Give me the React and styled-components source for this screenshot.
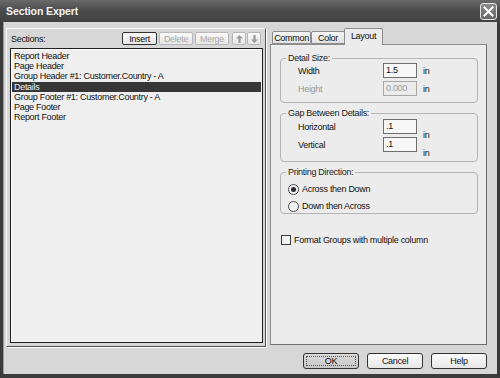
import React from 'react';
import styled, { createGlobalStyle } from 'styled-components';

const Global = createGlobalStyle`
  html, body { margin: 0; padding: 0; background: #3a3a3a; }
  body { font-family: "Liberation Sans", Arial, sans-serif; font-size: 9px; letter-spacing: -0.3px; color: #111; }
  * { box-sizing: border-box; }
`;

const Window = styled.div`
  width: 500px;
  height: 378px;
  display: flex;
  flex-direction: column;
  background: #3b3b3b;
`;

const TitleBar = styled.div`
  height: 22px;
  flex: none;
  display: flex;
  align-items: center;
  justify-content: space-between;
  padding: 0 3px 0 6px;
  background: linear-gradient(#6a6a6a, #4c4c4c 45%, #404040);
`;

const Title = styled.span`
  color: #f4f4f4;
  font-weight: bold;
  font-size: 10.5px;
  letter-spacing: -0.1px;
`;

const CloseButton = styled.div`
  width: 17px;
  height: 17px;
  border: 1px solid #e4e4e4;
  border-radius: 3px;
  background: linear-gradient(#8a8a8a, #666);
  display: flex;
  align-items: center;
  justify-content: center;
`;

const Body = styled.div`
  flex: 1;
  margin: 0 3px 4px;
  background: #d7d7d7;
  border-left: 1px solid #9a9a9a;
  display: flex;
  flex-direction: column;
  padding: 6px 10px 0 2px;
`;

const Main = styled.div`
  display: flex;
  gap: 4px;
  height: 319px;
`;

const LeftPanel = styled.div`
  width: 260px;
  display: flex;
  flex-direction: column;
  padding: 3px 2px 3px 3px;
  border-top: 1px solid #f6f6f6;
  border-left: 1px solid #f6f6f6;
  border-right: 1px solid #505050;
  border-bottom: 1px solid #505050;
  box-shadow: 1px 1px 0 #ffffff;
`;

const HeaderRow = styled.div`
  display: flex;
  align-items: center;
  height: 13px;
  gap: 2px;
`;

const Label = styled.span`
  flex: 1;
  padding-left: 1px;
`;

const SmallButton = styled.div`
  height: 13px;
  width: ${p => p.$w}px;
  display: flex;
  align-items: center;
  justify-content: center;
  border-radius: 2px;
  border: 1px solid ${p => (p.$disabled ? '#b8b8b8' : '#333')};
  color: ${p => (p.$disabled ? '#a8a8a8' : '#111')};
  background: linear-gradient(#fafafa, #e6e6e6);
`;

const ArrowGroup = styled.div`
  display: flex;
  gap: 1px;
  margin-left: 1px;
  margin-right: 2px;
`;

const List = styled.div`
  margin-top: 3px;
  flex: 1;
  background: #efefef;
  border: 1px solid #1e1e1e;
  box-shadow: inset 1px 1px 0 #fff;
  padding: 2px 1px;
`;

const ListItem = styled.div`
  height: 10.2px;
  line-height: 10px;
  padding-left: 2px;
  white-space: nowrap;
  background: ${p => (p.$selected ? '#363636' : 'transparent')};
  color: ${p => (p.$selected ? '#f0f0f0' : '#111')};
`;

const RightColumn = styled.div`
  width: 217px;
  display: flex;
  flex-direction: column;
`;

const Tabs = styled.div`
  display: flex;
  align-items: flex-end;
  height: 16px;
  padding-left: 2px;
  position: relative;
  z-index: 1;
`;

const Tab = styled.div`
  height: ${p => (p.$active ? 17 : 13)}px;
  margin-bottom: ${p => (p.$active ? -1 : 0)}px;
  width: ${p => p.$w}px;
  display: flex;
  align-items: center;
  justify-content: center;
  padding-bottom: ${p => (p.$active ? 3 : 0)}px;
  border: 1px solid #8c8c8c;
  border-bottom: ${p => (p.$active ? 'none' : '1px solid #8c8c8c')};
  border-radius: 2px 2px 0 0;
  background: ${p => (p.$active ? '#ececec' : 'linear-gradient(#f6f6f6, #e2e2e2)')};
  margin-left: ${p => (p.$active ? -1 : 0)}px;
`;

const TabPanel = styled.div`
  height: 301px;
  background: #ececec;
  border: 1px solid #8c8c8c;
  border-right-color: #6e6e6e;
  border-bottom-color: #6e6e6e;
  padding: 8px 8px 0 9px;
  display: flex;
  flex-direction: column;
`;

const Group = styled.fieldset`
  margin: 0 0 ${p => p.$mb || 0}px;
  padding: 0 0 ${p => p.$pb}px 0;
  border: 1px solid #b4b4b4;
  border-radius: 4px;
  min-width: 0;
  display: flex;
  flex-direction: column;
  gap: 3px;
`;

const Legend = styled.legend`
  margin-left: 5px;
  padding: 0 2px;
  line-height: 10px;
  height: 10px;
  color: #222;
`;

const FieldRow = styled.div`
  display: flex;
  align-items: ${p => (p.$drop ? 'flex-start' : 'center')};
  height: 15px;
  padding-left: 17px;
  margin-top: ${p => p.$mt || 0}px;
`;

const FieldLabel = styled.span`
  width: 85px;
  color: ${p => (p.$disabled ? '#9a9a9a' : '#111')};
  align-self: center;
`;

const Input = styled.div`
  width: 34px;
  height: 15px;
  border: 1px solid ${p => (p.$disabled ? '#a8a8a8' : '#6f6f6f')};
  background: ${p => (p.$disabled ? '#ebebeb' : '#f7f7f7')};
  color: ${p => (p.$disabled ? '#a0a0a0' : '#111')};
  padding: 1px 2px;
  line-height: 11px;
`;

const Unit = styled.span`
  margin-left: 6px;
  padding-top: ${p => (p.$drop ? 11 : 0)}px;
  line-height: 10px;
`;

const Option = styled.div`
  display: flex;
  align-items: center;
  height: 14px;
  padding-left: 7px;
  gap: 3px;
  margin-top: ${p => p.$mt || 0}px;
`;

const Radio = styled.span`
  width: 11px;
  height: 11px;
  border-radius: 50%;
  border: 1px solid #4a4a4a;
  background: #f4f4f4;
  display: flex;
  align-items: center;
  justify-content: center;
  &::after {
    content: '';
    width: 5px;
    height: 5px;
    border-radius: 50%;
    background: ${p => (p.$checked ? '#2a2a2a' : 'transparent')};
  }
`;

const CheckRow = styled.div`
  display: flex;
  align-items: center;
  gap: 3px;
  margin-top: 21px;
  margin-left: 1px;
`;

const Checkbox = styled.span`
  width: 10px;
  height: 10px;
  border: 1px solid #3a3a3a;
  background: #f4f4f4;
`;

const Footer = styled.div`
  display: flex;
  justify-content: flex-end;
  gap: 8px;
  margin-top: 6px;
`;

const DialogButton = styled.div`
  width: 56px;
  height: 16px;
  display: flex;
  align-items: center;
  justify-content: center;
  border: 1px solid #333;
  border-radius: 3px;
  background: ${p => (p.$default ? 'linear-gradient(#dadada, #c8c8c8)' : 'linear-gradient(#fbfbfb, #e6e6e6)')};
  position: relative;
  ${p => p.$default && `
    &::before {
      content: '';
      position: absolute;
      inset: 2px;
      border: 1px dotted #555;
    }
  `}
`;

const Arrow = ({ down }) => (
  <svg width="7" height="8" viewBox="0 0 7 8" style={{ transform: down ? 'rotate(180deg)' : 'none' }}>
    <path d="M3.5 0 L7 3.6 L4.6 3.6 L4.6 8 L2.4 8 L2.4 3.6 L0 3.6 Z" fill="#9a9a9a" />
  </svg>
);

const sections = [
  'Report Header',
  'Page Header',
  'Group Header #1: Customer.Country - A',
  'Details',
  'Group Footer #1: Customer.Country - A',
  'Page Footer',
  'Report Footer',
];

export default function App() {
  return (
    <>
      <Global />
      <Window>
        <TitleBar>
          <Title>Section Expert</Title>
          <CloseButton>
            <svg width="11" height="11" viewBox="0 0 11 11">
              <path d="M1.5 1.5 L9.5 9.5 M9.5 1.5 L1.5 9.5" stroke="#fff" strokeWidth="2" strokeLinecap="square" />
            </svg>
          </CloseButton>
        </TitleBar>
        <Body>
          <Main>
            <LeftPanel>
              <HeaderRow>
                <Label>Sections:</Label>
                <SmallButton $w={35}>Insert</SmallButton>
                <SmallButton $w={34} $disabled>Delete</SmallButton>
                <SmallButton $w={34} $disabled>Merge</SmallButton>
                <ArrowGroup>
                  <SmallButton $w={14} $disabled><Arrow /></SmallButton>
                  <SmallButton $w={14} $disabled><Arrow down /></SmallButton>
                </ArrowGroup>
              </HeaderRow>
              <List>
                {sections.map(s => (
                  <ListItem key={s} $selected={s === 'Details'}>{s}</ListItem>
                ))}
              </List>
            </LeftPanel>
            <RightColumn>
              <Tabs>
                <Tab $w={39}>Common</Tab>
                <Tab $w={34}>Color</Tab>
                <Tab $w={39} $active>Layout</Tab>
              </Tabs>
              <TabPanel>
                <Group $pb={6} $mb={5}>
                  <Legend>Detail Size:</Legend>
                  <FieldRow>
                    <FieldLabel>Width</FieldLabel>
                    <Input>1.5</Input>
                    <Unit>in</Unit>
                  </FieldRow>
                  <FieldRow>
                    <FieldLabel $disabled>Height</FieldLabel>
                    <Input $disabled>0.000</Input>
                    <Unit>in</Unit>
                  </FieldRow>
                </Group>
                <Group $pb={9} $mb={5}>
                  <Legend>Gap Between Details:</Legend>
                  <FieldRow $drop $mt={1}>
                    <FieldLabel>Horizontal</FieldLabel>
                    <Input>.1</Input>
                    <Unit $drop>in</Unit>
                  </FieldRow>
                  <FieldRow $drop>
                    <FieldLabel>Vertical</FieldLabel>
                    <Input>.1</Input>
                    <Unit $drop>in</Unit>
                  </FieldRow>
                </Group>
                <Group $pb={0}>
                  <Legend>Printing Direction:</Legend>
                  <Option $mt={5}>
                    <Radio $checked />
                    <span>Across then Down</span>
                  </Option>
                  <Option>
                    <Radio />
                    <span>Down then Across</span>
                  </Option>
                </Group>
                <CheckRow>
                  <Checkbox />
                  <span>Format Groups with multiple column</span>
                </CheckRow>
              </TabPanel>
            </RightColumn>
          </Main>
          <Footer>
            <DialogButton $default>OK</DialogButton>
            <DialogButton>Cancel</DialogButton>
            <DialogButton>Help</DialogButton>
          </Footer>
        </Body>
      </Window>
    </>
  );
}
